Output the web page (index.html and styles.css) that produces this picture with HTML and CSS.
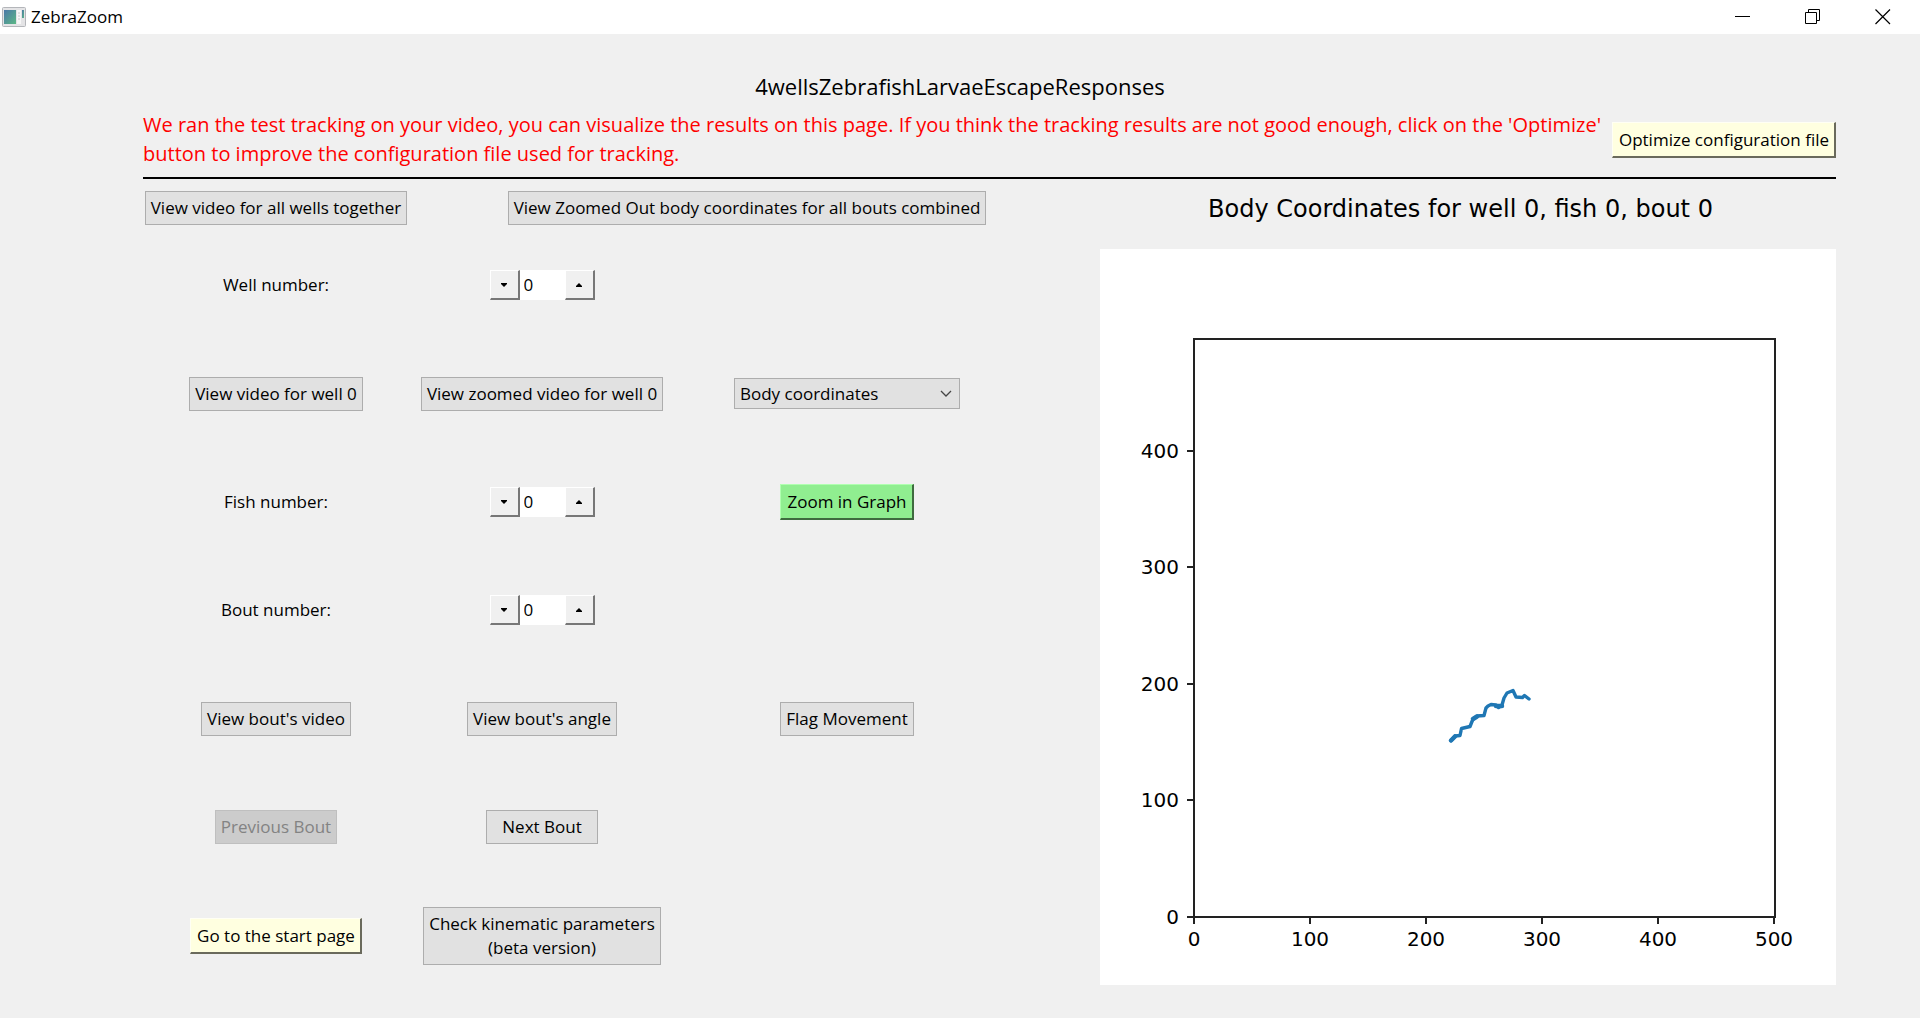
FILE: index.html
```html
<!DOCTYPE html>
<html lang="en">
<head>
<meta charset="utf-8">
<title>ZebraZoom</title>
<link rel="stylesheet" href="styles.css">
</head>
<body>
<header class="titlebar">
  <svg class="app-icon" width="24" height="20" viewBox="0 0 24 20" aria-hidden="true">
    <defs><linearGradient id="pane" x1="0" y1="0" x2="1" y2="1"><stop offset="0" stop-color="#4a78a8"/><stop offset="1" stop-color="#5cb885"/></linearGradient></defs>
    <rect x="0.5" y="0.5" width="23" height="19" rx="1" fill="#e4e4e6" stroke="#b4b6ba"/>
    <rect x="2" y="3" width="12" height="14" fill="url(#pane)"/>
    <rect x="15" y="3" width="4" height="14" fill="#f7f7f7"/>
    <path d="M16 6h2M16 9h2M16 12h2" stroke="#c8c8c8"/>
    <rect x="20" y="3" width="2" height="8" fill="url(#pane)"/>
  </svg>
  <span class="app-name">ZebraZoom</span>
  <div class="window-controls">
    <button type="button" class="window-button" aria-label="Minimize"><svg width="16" height="16" viewBox="0 0 16 16"><path d="M0 7.500h15" stroke="#000" fill="none"/></svg></button>
    <button type="button" class="window-button" aria-label="Restore"><svg width="16" height="16" viewBox="0 0 16 16"><path d="M.5 3.500h11v11h-11zM3.500 3V.5h11v11H12" stroke="#000" fill="none"/></svg></button>
    <button type="button" class="window-button" aria-label="Close"><svg width="16" height="16" viewBox="0 0 16 16"><path d="M.5 .5l14.500 14.500M15 .5L.5 15" stroke="#000" stroke-width="1.200" fill="none"/></svg></button>
  </div>
</header>
<main class="page">
  <h1 class="video-name">4wellsZebrafishLarvaeEscapeResponses</h1>
  <div class="notice">
    <p class="notice-text">We ran the test tracking on your video, you can visualize the results on this page. If you think the tracking results are not good enough, click on the 'Optimize' button to improve the configuration file used for tracking.</p>
    <button type="button" class="classic cream">Optimize configuration file</button>
  </div>
  <div class="results">
    <section class="controls">
      <button type="button" class="flat">View video for all wells together</button>
      <button type="button" class="flat span-rest">View Zoomed Out body coordinates for all bouts combined</button>

      <label class="first" for="well">Well number:</label>
      <div class="stepper">
        <button type="button" class="step" aria-label="Previous well"><svg width="8" height="4" viewBox="0 0 8 4"><path d="M1 0h6v1L4 4 1 1z"/></svg></button>
        <input id="well" type="text" value="0">
        <button type="button" class="step" aria-label="Next well"><svg width="8" height="4" viewBox="0 0 8 4"><path d="M4 0l3 3v1H1V3z"/></svg></button>
      </div>

      <button type="button" class="flat first">View video for well 0</button>
      <button type="button" class="flat">View zoomed video for well 0</button>
      <div class="picker">
        <select aria-label="Graph type"><option>Body coordinates</option></select>
        <svg class="chevron" width="12" height="8" viewBox="0 0 12 8" aria-hidden="true"><path d="M1 1l5 5 5-5" fill="none" stroke="#444" stroke-width="1.300"/></svg>
      </div>

      <label class="first" for="fish">Fish number:</label>
      <div class="stepper">
        <button type="button" class="step" aria-label="Previous fish"><svg width="8" height="4" viewBox="0 0 8 4"><path d="M1 0h6v1L4 4 1 1z"/></svg></button>
        <input id="fish" type="text" value="0">
        <button type="button" class="step" aria-label="Next fish"><svg width="8" height="4" viewBox="0 0 8 4"><path d="M4 0l3 3v1H1V3z"/></svg></button>
      </div>
      <button type="button" class="classic green">Zoom in Graph</button>

      <label class="first" for="bout">Bout number:</label>
      <div class="stepper">
        <button type="button" class="step" aria-label="Previous bout number"><svg width="8" height="4" viewBox="0 0 8 4"><path d="M1 0h6v1L4 4 1 1z"/></svg></button>
        <input id="bout" type="text" value="0">
        <button type="button" class="step" aria-label="Next bout number"><svg width="8" height="4" viewBox="0 0 8 4"><path d="M4 0l3 3v1H1V3z"/></svg></button>
      </div>

      <button type="button" class="flat first">View bout's video</button>
      <button type="button" class="flat">View bout's angle</button>
      <button type="button" class="flat">Flag Movement</button>

      <button type="button" class="flat first" disabled>Previous Bout</button>
      <button type="button" class="flat next">Next Bout</button>

      <button type="button" class="classic cream first">Go to the start page</button>
      <button type="button" class="flat">Check kinematic parameters<br>(beta version)</button>
    </section>
    <section class="graph">
      <h2 class="graph-title">Body Coordinates for well 0, fish 0, bout 0</h2>
      <svg class="plot" viewBox="0 0 736 736" role="img" aria-label="Body coordinates plot">
        <rect width="736" height="736" fill="#fff"/>
        <g fill="none" stroke="#222" stroke-width="2">
          <path d="M94 90H675V668H94z"/>
          <path d="M94 668v7M210 668v7M326 668v7M442 668v7M558 668v7M674 668v7"/>
          <path d="M94 668h-7M94 551h-7M94 435h-7M94 318h-7M94 202h-7"/>
        </g>
        <g class="tick-labels" text-anchor="middle">
          <text x="94" y="697">0</text><text x="210" y="697">100</text><text x="326" y="697">200</text>
          <text x="442" y="697">300</text><text x="558" y="697">400</text><text x="674" y="697">500</text>
        </g>
        <g class="tick-labels" text-anchor="end">
          <text x="79" y="675">0</text><text x="79" y="558">100</text><text x="79" y="442">200</text>
          <text x="79" y="325">300</text><text x="79" y="209">400</text>
        </g>
        <path d="M351 491.500L355 487 360 486.500 361.500 479.500 370 477.500 373 470 377 467 384 466.500 386 459 388 457 391 455.500 396 456 398.500 458.500 402 456 404 449 407 444 413 441.500 416 448 422.500 448.500 424.500 446.500 429 450" fill="none" stroke="#1f77b4" stroke-width="3.400" stroke-linejoin="round" stroke-linecap="round"/>
        <path d="M351 491.500l4-4M373 470l4-2.500M396 457l6 0" stroke="#1f77b4" stroke-width="4.500" stroke-linecap="round"/>
      </svg>
    </section>
  </div>
</main>
</body>
</html>
```
FILE: styles.css
```css
* { box-sizing: border-box; }
body {
  margin: 0;
  min-height: 100vh;
  display: flex;
  flex-direction: column;
  background: #f0f0f0;
  color: #000;
  font: 17px/24px "Open Sans", "Noto Sans", sans-serif;
}
button, input, select { font: inherit; color: inherit; margin: 0; border-radius: 0; }
h1, h2, p { margin: 0; font-weight: 400; }

.titlebar { display: flex; align-items: center; height: 34px; padding: 0 2px; background: #fff; }
.app-name { margin-left: 5px; }
.window-controls { display: flex; margin-left: auto; }
.window-button {
  width: 70px;
  height: 34px;
  display: grid;
  place-items: center;
  padding: 0;
  border: 0;
  background: none;
}

.page { flex: 1; display: flex; flex-direction: column; padding: 36px 84px 28px 143px; }
.video-name { margin: 0 0 7px -59px; text-align: center; font-size: 22px; line-height: 32px; }
.notice {
  display: flex;
  align-items: center;
  justify-content: space-between;
  gap: 8px;
  padding-bottom: 7px;
  border-bottom: 2px solid #000;
}
.notice-text { flex: 1; padding: 1px 0 2px; color: #f00; font-size: 20px; line-height: 29px; }

.results { flex: 1; display: grid; grid-template-columns: minmax(0, 942fr) minmax(0, 751fr); padding-top: 12px; }
.controls {
  display: grid;
  grid-template-columns: minmax(0, 266fr) minmax(0, 266fr) minmax(0, 344fr) minmax(0, 66fr);
  grid-template-rows: 40px repeat(7, 1fr);
  place-items: center;
}
.controls > :nth-child(-n+2) { align-self: start; }
.span-rest { grid-column: 2 / -1; }
.first { grid-column: 1; }

.flat { padding: 4px 5px; border: 1px solid #adadad; background: #e1e1e1; white-space: nowrap; }
.flat:disabled { border-color: #bfbfbf; background: #ccc; color: #838383; }
.next { padding-inline: 15px; }
.classic { padding: 5px 5px 4px 6px; border-style: solid; border-width: 1px 2px 2px 1px; white-space: nowrap; }
.cream { background: #ffffe0; border-color: #fffff4 #6a6a5c #6a6a5c #fffff4; }
.green { background: #90ee90; border-color: #b0ffb0 #3f6b3f #3f6b3f #b0ffb0; }

.stepper { display: flex; height: 30px; background: #fff; }
.stepper input { width: 45px; padding: 0 4px; border: 0; background: #fff; }
.step {
  width: 30px;
  display: grid;
  place-items: center;
  padding: 0;
  border: solid;
  border-width: 1px 2px 2px 1px;
  border-color: #fff #777 #777 #fff;
  background: #f0f0f0;
}

.picker { position: relative; }
.picker select {
  display: block;
  appearance: none;
  width: 226px;
  height: 31px;
  padding: 0 5px;
  border: 1px solid #adadad;
  background: #e1e1e1;
}
.chevron { position: absolute; right: 8px; top: 12px; pointer-events: none; }

.graph { display: flex; flex-direction: column; }
.graph-title {
  height: 58px;
  text-align: center;
  font: 24px/36px "DejaVu Sans", sans-serif;
}
.plot { display: block; margin-left: 15px; }
.tick-labels { font: 20px "DejaVu Sans", sans-serif; }
```
